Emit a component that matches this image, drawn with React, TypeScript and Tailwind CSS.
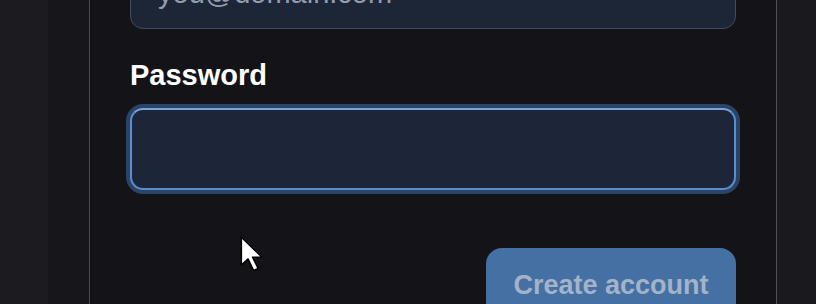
import React from 'react';

const Cursor: React.FC = () => (
  <svg
    className="absolute left-[239px] top-[235px]"
    width="27"
    height="40"
    viewBox="0 0 24 36"
  >
    <path
      d="M2 2 L2 27 L8 21.5 L13 32 L17 30 L12 20 L20.5 20 Z"
      fill="#ffffff"
      stroke="#000000"
      strokeWidth="1.3"
      strokeLinejoin="round"
    />
  </svg>
);

const App: React.FC = () => {
  return (
    <div className="relative h-[304px] w-[816px] overflow-hidden bg-[#1b1b20] font-['Liberation_Sans',Arial,sans-serif]">
      <div className="flex h-full">
        <div className="w-[48px] bg-[#1b1b20]" />
        <div className="w-[41px] bg-[#16161b]" />

        {/* sign-up card, scrolled so the email field is cut off at the top */}
        <div className="w-[688px] border-l border-r border-l-[#34506f] border-r-[#505057] bg-[#141418] px-[40px]">
          <div className="-mt-[53px] flex flex-col">
            <input
              type="email"
              placeholder="you@domain.com"
              className="h-[82px] w-full rounded-[13px] border border-[#434c5c] bg-[#1d2637] px-[27px] pt-[10px] text-[29px] text-[#d0d5dd] placeholder:text-[#949db0] outline-none"
            />

            <label className="mt-[29px] text-[29px] font-bold leading-[35px] text-white">
              Password
            </label>
            <input
              type="password"
              className="mt-[15px] h-[82px] w-full rounded-[13px] border-2 border-[#5a8dd0] border-t-[#7ea3d6] bg-[#1d2638] px-[27px] text-[29px] text-white shadow-[0_0_0_4px_#2a4466] outline-none"
            />

            <div className="mt-[58px] flex justify-end">
              <button
                disabled
                className="w-[250px] rounded-[16px] bg-[#4570a4] pb-[17px] pt-[22px] text-[27px] font-bold leading-[31px] text-[#a3b3c8]"
              >
                Create account
              </button>
            </div>
          </div>
        </div>

        <div className="flex-1 bg-[#1a1a1e]" />
      </div>
      <Cursor />
    </div>
  );
};

export default App;
